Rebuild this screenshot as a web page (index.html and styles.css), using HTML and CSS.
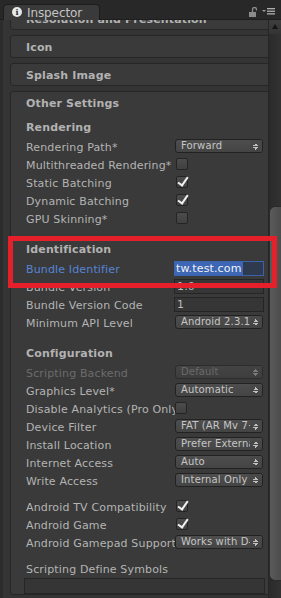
FILE: index.html
```html
<!DOCTYPE html>
<html lang="en">
<head>
    <meta charset="UTF-8">
    <title>Inspector</title>
    <link rel="stylesheet" href="styles.css">
</head>
<body>
<div class="window">
    <div class="tabbar">
        <div class="tab">
            <span class="info-icon">i</span>
            <span class="tab-title">Inspector</span>
        </div>
        <div class="tab-tools">
            <svg class="lock" width="8" height="10" viewBox="0 0 8 10">
                <path d="M3.5 5 V2.5 A2 2 0 0 1 7.5 2.5 V3.5" fill="none" stroke="#8c8c8c" stroke-width="1.3"/>
                <rect x="0" y="5" width="7" height="5" fill="#8c8c8c"/>
            </svg>
            <svg class="menu" width="13" height="7" viewBox="0 0 13 7">
                <path d="M0 2 H4 L2 4 Z" fill="#9a9a9a"/>
                <rect x="5" y="0" width="8" height="1.3" fill="#b0b0b0"/>
                <rect x="5" y="2.6" width="8" height="1.3" fill="#b0b0b0"/>
                <rect x="5" y="5.2" width="8" height="1.3" fill="#b0b0b0"/>
            </svg>
        </div>
    </div>

    <div class="panel">
        <div class="content">
            <div class="section first"><div class="section-title">Resolution and Presentation</div></div>
            <div class="section"><div class="section-title">Icon</div></div>
            <div class="section"><div class="section-title">Splash Image</div></div>

            <div class="section">
                <div class="section-title">Other Settings</div>
                <div class="section-body">

                    <div class="group">
                        <div class="group-title">Rendering</div>
                        <div class="row"><span class="label">Rendering Path*</span><div class="popup">Forward</div></div>
                        <div class="row"><span class="label">Multithreaded Rendering*</span><span class="check"></span></div>
                        <div class="row"><span class="label">Static Batching</span><span class="check on"></span></div>
                        <div class="row"><span class="label">Dynamic Batching</span><span class="check on"></span></div>
                        <div class="row"><span class="label">GPU Skinning*</span><span class="check"></span></div>
                    </div>

                    <div class="group">
                        <div class="group-title">Identification</div>
                        <div class="row"><span class="label active">Bundle Identifier</span><div class="field focused"><span class="selection">tw.test.com</span></div></div>
                        <div class="row"><span class="label">Bundle Version</span><div class="field">1.0</div></div>
                        <div class="row"><span class="label">Bundle Version Code</span><div class="field">1</div></div>
                        <div class="row"><span class="label">Minimum API Level</span><div class="popup">Android 2.3.1</div></div>
                    </div>

                    <div class="group">
                        <div class="group-title">Configuration</div>
                        <div class="row disabled"><span class="label">Scripting Backend</span><div class="popup">Default</div></div>
                        <div class="row"><span class="label">Graphics Level*</span><div class="popup">Automatic</div></div>
                        <div class="row"><span class="label">Disable Analytics (Pro Only)</span><span class="check tight"></span></div>
                        <div class="row"><span class="label">Device Filter</span><div class="popup">FAT (AR Mv 7+x86)</div></div>
                        <div class="row"><span class="label">Install Location</span><div class="popup">Prefer External</div></div>
                        <div class="row"><span class="label">Internet Access</span><div class="popup">Auto</div></div>
                        <div class="row"><span class="label">Write Access</span><div class="popup">Internal Only</div></div>
                    </div>

                    <div class="group small-gap">
                        <div class="row"><span class="label">Android TV Compatibility</span><span class="check on"></span></div>
                        <div class="row"><span class="label">Android Game</span><span class="check on"></span></div>
                        <div class="row"><span class="label">Android Gamepad Support Level</span><div class="popup">Works with D-pad</div></div>
                    </div>

                    <div class="group small-gap">
                        <div class="row"><span class="label">Scripting Define Symbols</span></div>
                        <div class="field wide"></div>
                    </div>

                </div>
            </div>
        </div>

        <div class="scrollbar">
            <div class="scroll-up"></div>
            <div class="thumb"></div>
        </div>
    </div>

    <!-- annotation box drawn over the inspector -->
    <div class="highlight"></div>
</div>
</body>
</html>
```

FILE: styles.css
```css
body {
    margin: 0;
    padding: 0;
    background-color: #2a2a2a;
    font-family: "DejaVu Sans", sans-serif;
    font-size: 11px;
    letter-spacing: 0.15px;
    color: #b4b4b4;
}

.window {
    position: relative;
    width: 281px;
    height: 598px;
    overflow: hidden;
}

/* tab strip */
.tabbar {
    height: 20px;
    display: flex;
    justify-content: space-between;
    background-color: #282828;
    border-bottom: 1px solid #1e1e1e;
    box-sizing: border-box;
}

.tab {
    margin: 4px 0 -1px 3px;
    width: 97px;
    box-sizing: border-box;
    display: flex;
    align-items: center;
    padding-left: 8px;
    background-color: #3a3a3a;
    border: 1px solid #1d1d1d;
    border-bottom: none;
    border-radius: 4px 4px 0 0;
}

.info-icon {
    width: 10px;
    height: 10px;
    border-radius: 50%;
    background-color: #e8e8e8;
    color: #2a2a2a;
    font-family: "DejaVu Serif", serif;
    font-weight: bold;
    font-size: 8px;
    line-height: 10px;
    text-align: center;
    letter-spacing: 0;
    margin-top: -2px;
}

.tab-title {
    margin-left: 5px;
    font-size: 12px;
    letter-spacing: -0.1px;
    color: #c4c4c4;
}

.tab-tools {
    display: flex;
    align-items: center;
    padding: 4px 6px 0 0;
}

.lock {
    margin-right: 5px;
}

/* inspector body */
.panel {
    display: flex;
    height: 578px;
}

.content {
    width: 268px;
    flex: none;
    overflow: hidden;
    padding-left: 10px;
    box-sizing: border-box;
    background: linear-gradient(to right, #2c2c2c 0, #2c2c2c 3px, #343434 3px);
}

.section {
    margin: 0 -3px 5px 0;
    border: 1px solid #262626;
    border-radius: 3px;
    background-color: #3a3a3a;
}

.section.first {
    margin-top: -13px;
}

.section-title {
    height: 21px;
    box-sizing: border-box;
    padding: 2px 0 0 15px;
    line-height: 20px;
    font-weight: bold;
    color: #b2b2b2;
    white-space: nowrap;
}

.section-body {
    padding: 4px 0 0 15px;
}

.group + .group {
    margin-top: 12px;
}

.group.small-gap {
    margin-top: 8px;
}

.group-title {
    height: 18px;
    box-sizing: border-box;
    padding-top: 2px;
    line-height: 17px;
    margin-bottom: 2px;
    font-weight: bold;
    color: #b2b2b2;
}

.row {
    height: 18px;
    display: flex;
    align-items: center;
}

.label {
    width: 149px;
    flex: none;
    padding-top: 2px;
    overflow: hidden;
    white-space: nowrap;
}

.label.active {
    color: #5784d8;
}

.row.disabled .label {
    color: #6c6c6c;
}

/* dropdowns */
.popup {
    position: relative;
    width: 88px;
    height: 14px;
    box-sizing: border-box;
    padding: 0 12px 0 5px;
    border: 1px solid #222;
    border-radius: 3px;
    background: linear-gradient(#4e4e4e, #444);
    font-size: 10px;
    line-height: 12px;
    color: #c6c6c6;
    white-space: nowrap;
    overflow: hidden;
}

.popup::after {
    content: "";
    position: absolute;
    right: 0;
    top: 0;
    width: 12px;
    height: 12px;
    background: linear-gradient(#4a4a4a, #444);
}

.popup::before {
    content: "";
    position: absolute;
    right: 4px;
    top: 3px;
    width: 5px;
    height: 7px;
    z-index: 1;
    background:
        linear-gradient(to bottom right, transparent 50%, #c0c0c0 50%) left top / 3px 3px no-repeat,
        linear-gradient(to bottom left, transparent 50%, #c0c0c0 50%) right top / 2px 3px no-repeat,
        linear-gradient(to top right, transparent 50%, #c0c0c0 50%) left bottom / 3px 3px no-repeat,
        linear-gradient(to top left, transparent 50%, #c0c0c0 50%) right bottom / 2px 3px no-repeat;
}

.row.disabled .popup {
    color: #6a6a6a;
    background: linear-gradient(#444, #3e3e3e);
    border-color: #2c2c2c;
}

.row.disabled .popup::after {
    background: linear-gradient(#424242, #3e3e3e);
}

.row.disabled .popup::before {
    opacity: 0.45;
}

/* toggles */
.check {
    position: relative;
    width: 12px;
    height: 12px;
    box-sizing: border-box;
    margin-left: 1px;
    border: 1px solid #242424;
    border-radius: 2px;
    background: linear-gradient(#4c4c4c, #404040);
}

.check.tight {
    margin-left: 0;
}

.check.on::after {
    content: "";
    position: absolute;
    left: 3px;
    top: -2px;
    width: 4px;
    height: 9px;
    border-right: 2px solid #f0f0f0;
    border-bottom: 2px solid #f0f0f0;
    transform: rotate(35deg);
}

/* text fields */
.field {
    width: 90px;
    height: 15px;
    box-sizing: border-box;
    margin-left: -1px;
    padding-left: 2px;
    border: 1px solid #252525;
    background-color: #363636;
    line-height: 13px;
    color: #bcbcbc;
    white-space: nowrap;
    overflow: hidden;
}

.field.focused {
    border-color: #3c62ad;
    background-color: #2f3a4f;
    padding-left: 0;
}

.selection {
    display: inline-block;
    padding: 0 1px;
    background-color: #3d66b5;
    color: #f2f2f2;
}

.field.wide {
    width: 241px;
    height: 16px;
    margin: 1px 0 0 -2px;
    background-color: #353535;
    border-color: #262626;
}

/* scrollbar */
.scrollbar {
    width: 13px;
    flex: none;
    background: linear-gradient(to right, #2a2a2a, #323232);
    border-left: 1px solid #262626;
    box-sizing: border-box;
}

.scroll-up {
    height: 14px;
    position: relative;
    background: linear-gradient(#3e3e3e, #343434);
}

.scroll-up::after {
    content: "";
    position: absolute;
    left: 3px;
    top: 4px;
    border-left: 3px solid transparent;
    border-right: 3px solid transparent;
    border-bottom: 5px solid #151515;
}

.thumb {
    margin-top: 172px;
    height: 373px;
    border-radius: 6px 0 0 6px;
    background: linear-gradient(to right, #5a5a5a, #4c4c4c);
    border: 1px solid #2a2a2a;
    border-right: none;
}

/* red annotation frame */
.highlight {
    position: absolute;
    left: 8px;
    top: 236px;
    width: 269px;
    height: 52px;
    box-sizing: border-box;
    border: 5px solid #e5202b;
}
```
